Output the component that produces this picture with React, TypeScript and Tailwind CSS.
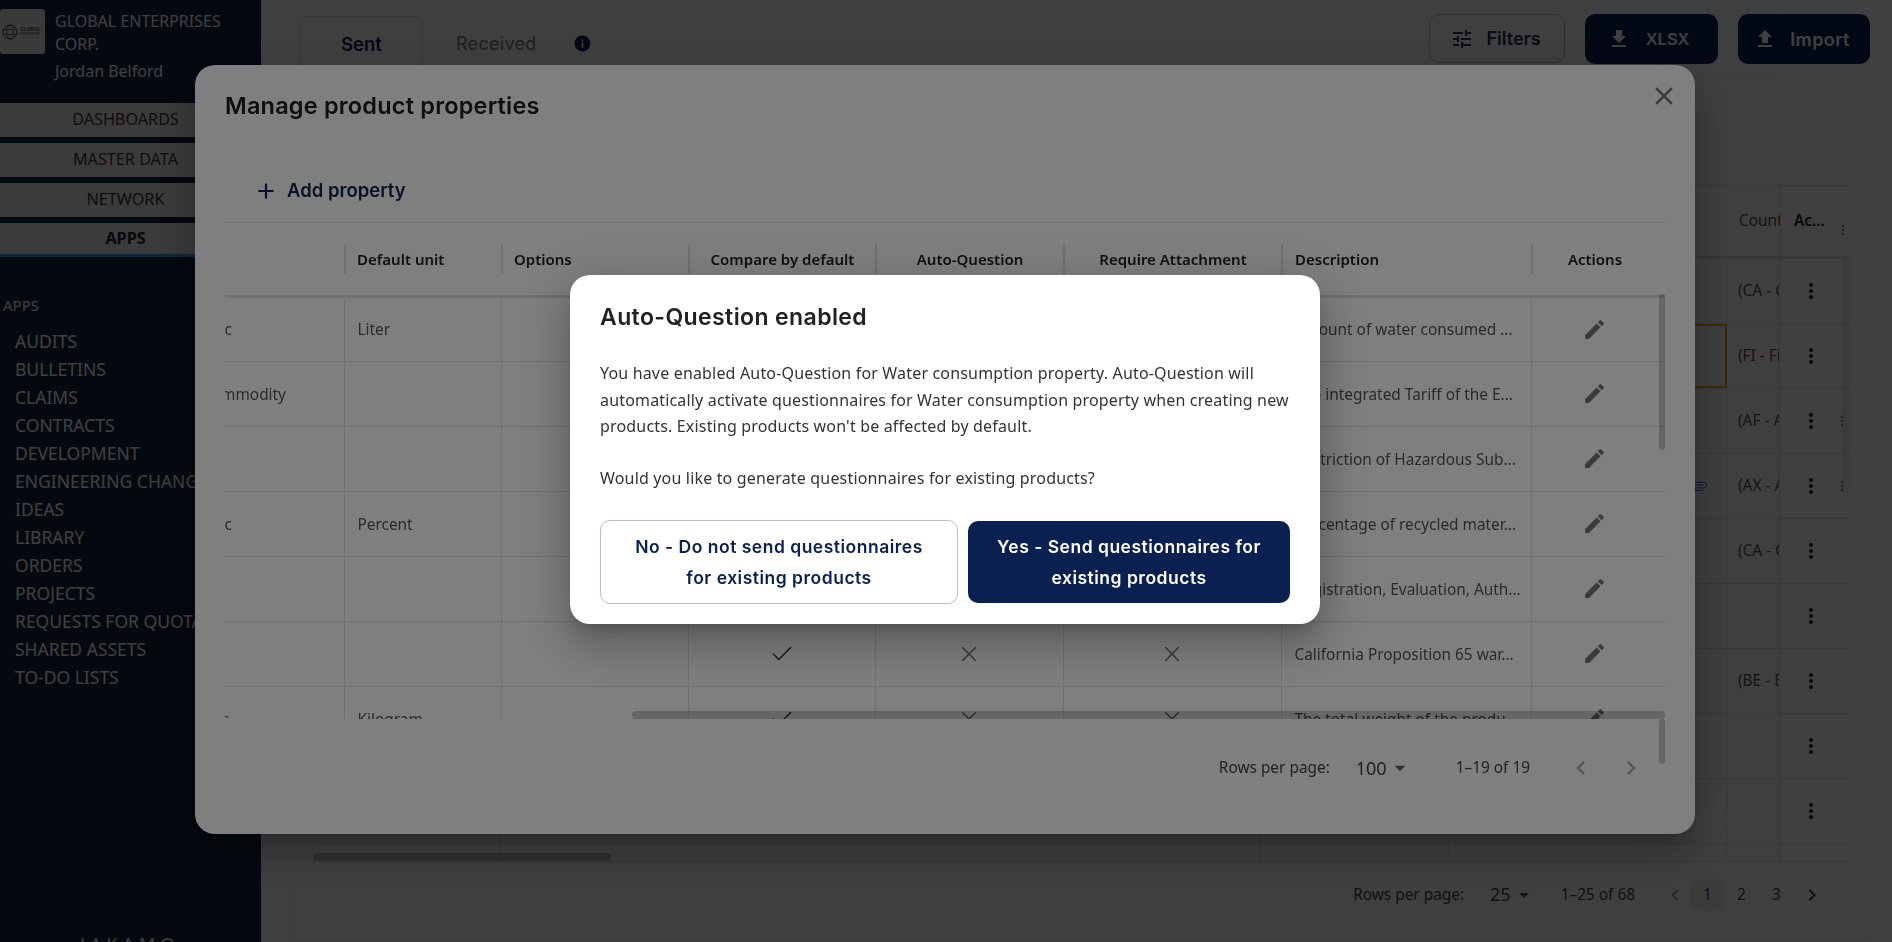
import { Check, X } from 'lucide-react';
import {
  MdAdd,
  MdArrowDropDown,
  MdAttachFile,
  MdClose,
  MdEdit,
  MdFileDownload,
  MdFileUpload,
  MdInfo,
  MdKeyboardArrowLeft,
  MdKeyboardArrowRight,
  MdMoreVert,
  MdTune,
} from 'react-icons/md';

const bodyFont = "font-['Noto_Sans',sans-serif]";
const headFont = "font-['Inter',sans-serif]";

const navItems = ['DASHBOARDS', 'MASTER DATA', 'NETWORK'];
const apps = [
  'AUDITS',
  'BULLETINS',
  'CLAIMS',
  'CONTRACTS',
  'DEVELOPMENT',
  'ENGINEERING CHANGES',
  'IDEAS',
  'LIBRARY',
  'ORDERS',
  'PROJECTS',
  'REQUESTS FOR QUOTATION',
  'SHARED ASSETS',
  'TO-DO LISTS',
];

const countries = ['(CA - Canada)', '(FI - Finland)', '(AF - Afghanistan)', '(AX - Aland)', '(CA - Canada)', '', '(BE - Belgium)', '', '', ''];

const properties = [
  { type: 'Disc', unit: 'Liter', auto: true, desc: 'Amount of water consumed ...' },
  { type: 'Commodity', unit: '', auto: false, desc: 'The integrated Tariff of the E...' },
  { type: '', unit: '', auto: false, desc: 'Restriction of Hazardous Sub...' },
  { type: 'Disc', unit: 'Percent', auto: false, desc: 'Percentage of recycled mater...' },
  { type: '', unit: '', auto: false, desc: 'Registration, Evaluation, Auth...' },
  { type: '', unit: '', auto: false, desc: 'California Proposition 65 war...' },
  { type: 'Oils', unit: 'Kilogram', auto: false, desc: 'The total weight of the produ...' },
];

function Sidebar() {
  return (
    <aside className="w-[261px] h-full shrink-0 bg-[#12223c] text-white flex flex-col overflow-hidden">
      <div className="flex gap-[10px] pt-[9px] h-[103px] shrink-0">
        <div className="w-[45px] h-[45px] bg-[#e8e8e8] rounded-[3px] shrink-0 flex items-center justify-center">
          <svg width="41" height="20" viewBox="0 0 41 20">
            <circle cx="8" cy="10" r="7" fill="none" stroke="#444" strokeWidth="1" />
            <ellipse cx="8" cy="10" rx="3.5" ry="7" fill="none" stroke="#444" strokeWidth="0.7" />
            <path d="M1 7.5h14M1 12.5h14" stroke="#444" strokeWidth="0.7" />
            <text x="18" y="9" fontSize="5" fontWeight="700" fill="#444" fontFamily="Liberation Sans, sans-serif">GLOBAL</text>
            <text x="18" y="13" fontSize="2.8" fill="#444" fontFamily="Liberation Sans, sans-serif">ENTERPRISES</text>
            <text x="18" y="16" fontSize="2" fill="#444" fontFamily="Liberation Sans, sans-serif">CORPORATION INC</text>
          </svg>
        </div>
        <div className="text-[16px] leading-[23px] pt-[1px]">
          <div className="w-[190px]">GLOBAL ENTERPRISES CORP.</div>
          <div className="mt-[4px]">Jordan Belford</div>
        </div>
      </div>
      <nav className="flex flex-col gap-[6px]">
        {navItems.map((item) => (
          <div key={item} className="h-[34px] bg-[#ededed] text-[#3a3a3a] text-[16.2px] pr-[10px] pb-[2px] flex items-center justify-center">
            {item}
          </div>
        ))}
        <div className="h-[34px] bg-[#ededed] text-[#222] text-[16.2px] font-bold pr-[10px] border-b-[3px] border-[#3f9fe0] flex items-center justify-center">
          APPS
        </div>
      </nav>
      <div className="pl-[3px] mt-[38px] text-[15px] leading-[20px]">APPS</div>
      <ul className="mt-[12px] pl-[15px] text-[17.5px] leading-[28px] whitespace-nowrap">
        {apps.map((app) => (
          <li key={app}>{app}</li>
        ))}
      </ul>
      <div className="mt-auto -mb-[12px] pl-[80px] text-[18px] leading-[20px] tracking-[5px]">JAKAMO</div>
    </aside>
  );
}

function TopBar() {
  return (
    <div className={`flex items-start justify-between pl-[39px] pr-[22px] pt-[14px] h-[76px] ${headFont}`}>
      <div className="flex items-start">
        <div className="w-[123px] h-[62px] -mb-[12px] mt-[2px] border border-[#e0e0e0] rounded-t-[8px] flex items-center justify-center text-[#0a2050] font-semibold text-[18.5px] pb-[4px]">
          Sent
        </div>
        <div className="ml-[33px] mt-[18px] text-[#777] text-[18px] tracking-[0.3px] leading-[24px]">Received</div>
        <MdInfo className="ml-[36px] mt-[20px] text-[#0a2050]" size={19} />
      </div>
      <div className="flex items-start gap-[20px]">
        <button className="w-[136px] h-[49px] border border-[#bbb] rounded-[10px] flex items-center justify-center gap-[12px] pr-[3px] text-[#1d3057] font-semibold text-[18px]">
          <MdTune size={24} />
          Filters
        </button>
        <button className="w-[133px] h-[50px] bg-[#0a2050] rounded-[10px] flex items-center justify-center gap-[15px] pr-[7px] text-white font-semibold text-[16.5px]">
          <MdFileDownload size={24} />
          XLSX
        </button>
        <button className="w-[132px] h-[50px] bg-[#0a2050] rounded-[10px] flex items-center justify-center gap-[13px] pr-[5px] text-white font-semibold text-[18px] tracking-[0.4px]">
          <MdFileUpload size={24} />
          Import
        </button>
      </div>
    </div>
  );
}

function RequestsTable() {
  return (
    <div className={`ml-[31px] mr-[22px] flex-1 border border-[#f0f0f0] rounded-t-[8px] px-[20px] pt-[108px] overflow-hidden ${bodyFont}`}>
      <div className="relative h-[677px] border-y border-[#e0e0e0] overflow-hidden">
        <div className="grid grid-cols-[188px_760px_188px_278px_53px_70px] h-[73px] border-b-[3px] border-[#e0e0e0] items-center text-[15.4px]">
          <div />
          <div />
          <div />
          <div />
          <div className="col-start-5 text-[#555] overflow-hidden h-full flex items-center">
            <span className="ml-[12px]">Count</span>
          </div>
          <div className="relative border-l border-[#e0e0e0] h-full flex items-center pl-[13px] font-semibold text-[#222]">
            Ac...
            <MdMoreVert className="absolute right-[-1px] top-[36px] text-[#888]" size={16} />
          </div>
        </div>
        {countries.map((country, i) => (
          <div key={i} className="relative grid grid-cols-[188px_760px_188px_278px_53px_70px] h-[65px] border-b border-[#e0e0e0] text-[15.4px] text-[#555]">
            <div className="border-r border-[#e0e0e0]" />
            <div className="border-r border-[#e0e0e0]" />
            <div className="border-r border-[#e0e0e0]" />
            <div className={`border-r border-[#e0e0e0] flex items-center justify-end pr-[18px] ${i === 1 ? 'outline-2 -outline-offset-2 outline-[#e6b800]' : ''}`}>
              {i === 3 && <MdAttachFile className="text-[#4a7fd4] rotate-90" size={20} />}
            </div>
            <div className="border-r border-[#e0e0e0] overflow-hidden whitespace-nowrap pl-[11px] flex items-center">{country}</div>
            <div className="flex items-center pl-[19px] text-[#222]">
              <MdMoreVert size={24} />
            </div>
            {(i === 2 || i === 3) && <MdMoreVert className="absolute right-[-1px] top-[24px] text-[#888]" size={16} />}
          </div>
        ))}
        <div className="absolute right-0 top-[72px] w-[7px] h-[235px] bg-[#999]/20 rounded-full" />
        <div className="absolute left-0 bottom-0 w-[298px] h-[8px] bg-[#999]/60 rounded-full" />
      </div>
      <div className="h-[65px] flex items-center justify-end pr-[25px] text-[#444] text-[15.4px]">
        <span>Rows per page:</span>
        <span className="ml-[26px] text-[18px] flex items-center">
          25
          <MdArrowDropDown size={24} className="ml-[1px] text-[#555]" />
        </span>
        <span className="ml-[25px]">1–25 of 68</span>
        <MdKeyboardArrowLeft size={22} className="ml-[29px] text-[#999]" />
        <span className="ml-[5px] w-[33px] h-[32px] rounded-[8px] bg-[#eee] flex items-center justify-center">1</span>
        <span className="w-[35px] text-center">2</span>
        <span className="w-[35px] text-center">3</span>
        <MdKeyboardArrowRight size={24} className="ml-[6px]" />
      </div>
    </div>
  );
}

function PropertiesModal() {
  const border = 'border-[#e0e0e0]';
  return (
    <div className="relative w-[1500px] h-[769px] bg-white rounded-[20px] px-[30px] shadow-[0_11px_15px_-7px_rgba(0,0,0,.2),0_24px_38px_3px_rgba(0,0,0,.14),0_9px_46px_8px_rgba(0,0,0,.12)]">
      <h2 className={`h-[90px] flex items-center pb-[8px] text-[#1c1c1c] text-[23.5px] tracking-[0.2px] font-semibold ${headFont}`}>Manage product properties</h2>
      <MdClose className="absolute right-[16px] top-[16px] text-[#777]" size={30} />
      <div className={`h-[68px] flex items-center pl-[28px] pt-[4px] border-b ${border} text-[#0a2050]`}>
        <MdAdd size={26} />
        <span className={`ml-[8px] text-[18.5px] font-semibold ${headFont}`}>Add property</span>
      </div>
      <div className={`relative h-[496px] overflow-hidden ${bodyFont}`}>
        <table className="w-[1440px] table-fixed border-collapse text-[15.4px] text-[#555]">
          <colgroup>
            <col className="w-[119px]" />
            <col className="w-[157px]" />
            <col className="w-[187px]" />
            <col className="w-[187px]" />
            <col className="w-[188px]" />
            <col className="w-[218px]" />
            <col className="w-[250px]" />
            <col className="w-[134px]" />
          </colgroup>
          <thead>
            <tr className={`h-[73px] border-b-[3px] ${border} text-[#222] text-[15px] font-semibold`}>
              <th />
              {[
                { label: 'Default unit', align: 'justify-start pl-[11px]' },
                { label: 'Options', align: 'justify-start pl-[11px]' },
                { label: 'Compare by default', align: 'justify-center' },
                { label: 'Auto-Question', align: 'justify-center' },
                { label: 'Require Attachment', align: 'justify-center' },
                { label: 'Description', align: 'justify-start pl-[12px]' },
                { label: 'Actions', align: 'justify-center pr-[8px]' },
              ].map((col) => (
                <th key={col.label} className="p-0 font-semibold">
                  <div className={`h-[30px] pt-[1px] flex items-center border-l-2 ${border} ${col.align}`}>{col.label}</div>
                </th>
              ))}
            </tr>
          </thead>
          <tbody>
            {properties.map((row, i) => (
              <tr key={i} className={`h-[65px] border-b ${border}`}>
                <td className="p-0 pt-[2px] overflow-hidden whitespace-nowrap">
                  <span className="block -ml-[23px]">{row.type}</span>
                </td>
                <td className={`border-l ${border} pl-[13px] pt-[2px]`}>{row.unit}</td>
                <td className={`border-l ${border}`} />
                <td className={`border-l ${border}`}>
                  <Check className="mx-auto text-[#333]" size={26} strokeWidth={1.4} />
                </td>
                <td className={`border-l ${border}`}>
                  {row.auto ? (
                    <Check className="mx-auto text-[#333]" size={26} strokeWidth={1.4} />
                  ) : (
                    <X className="mx-auto text-[#777]" size={26} strokeWidth={1.4} />
                  )}
                </td>
                <td className={`border-l ${border}`}>
                  <X className="mx-auto text-[#777]" size={26} strokeWidth={1.4} />
                </td>
                <td className={`border-l ${border} pl-[13px] pt-[2px] whitespace-nowrap overflow-hidden`}>{row.desc}</td>
                <td className={`border-l ${border}`}>
                  <MdEdit className="mx-auto -translate-x-[4px] text-[#777]" size={25} />
                </td>
              </tr>
            ))}
          </tbody>
        </table>
        <div className="absolute right-0 top-[71px] w-[6px] h-[156px] rounded-full bg-[#000]/20" />
        <div className="absolute right-0 bottom-0 left-[407px] h-[8px] rounded-full bg-[#000]/20" />
      </div>
      <div className={`relative h-[98px] flex items-center justify-end pr-[20px] text-[#444] text-[15.4px] ${bodyFont}`}>
        <span>Rows per page:</span>
        <span className="ml-[26px] text-[18px] flex items-center">
          100
          <MdArrowDropDown size={26} className="text-[#666]" />
        </span>
        <span className="ml-[43px]">1–19 of 19</span>
        <MdKeyboardArrowLeft size={28} className="ml-[37px] text-[#aaa]" />
        <MdKeyboardArrowRight size={28} className="ml-[22px] text-[#aaa]" />
        <div className="absolute right-0 top-0 w-[6px] h-[45px] rounded-full bg-[#000]/20" />
      </div>
    </div>
  );
}

function AutoQuestionDialog() {
  return (
    <div className="w-[750px] h-[349px] bg-white rounded-[20px] px-[30px] pt-[27px] shadow-[0_11px_15px_-7px_rgba(0,0,0,.2),0_24px_38px_3px_rgba(0,0,0,.14),0_9px_46px_8px_rgba(0,0,0,.12)]">
      <h3 className={`text-[#222] text-[23px] leading-[30px] tracking-[0.4px] font-semibold ${headFont}`}>Auto-Question enabled</h3>
      <div className={`mt-[28px] text-[#333] text-[16px] leading-[26.6px] tracking-[0.17px] ${bodyFont}`}>
        <p>
          You have enabled Auto-Question for Water consumption property. Auto-Question will automatically activate
          questionnaires for Water consumption property when creating new products. Existing products won't be affected
          by default.
        </p>
        <p className="mt-[25px]">Would you like to generate questionnaires for existing products?</p>
      </div>
      <div className={`mt-[29px] flex items-center gap-[10px] font-semibold text-[17.5px] tracking-[0.5px] leading-[31px] text-center ${headFont}`}>
        <button className="w-[358px] h-[84px] border border-[#b8bdd0] rounded-[10px] text-[#0a2050] px-[20px]">
          No - Do not send questionnaires for existing products
        </button>
        <button className="w-[322px] h-[82px] bg-[#0a2050] rounded-[10px] text-white px-[20px]">
          Yes - Send questionnaires for existing products
        </button>
      </div>
    </div>
  );
}

export default function App() {
  return (
    <div className={`relative w-full h-screen overflow-hidden bg-white flex ${bodyFont}`}>
      <Sidebar />
      <main className="flex-1 h-full flex flex-col min-w-0">
        <TopBar />
        <RequestsTable />
      </main>
      <div className="fixed inset-0 bg-black/50 flex justify-center items-start pt-[65px] pr-[2px]">
        <PropertiesModal />
      </div>
      <div className="fixed inset-0 bg-black/50 flex justify-center items-start pt-[275px] pr-[2px]">
        <AutoQuestionDialog />
      </div>
    </div>
  );
}
